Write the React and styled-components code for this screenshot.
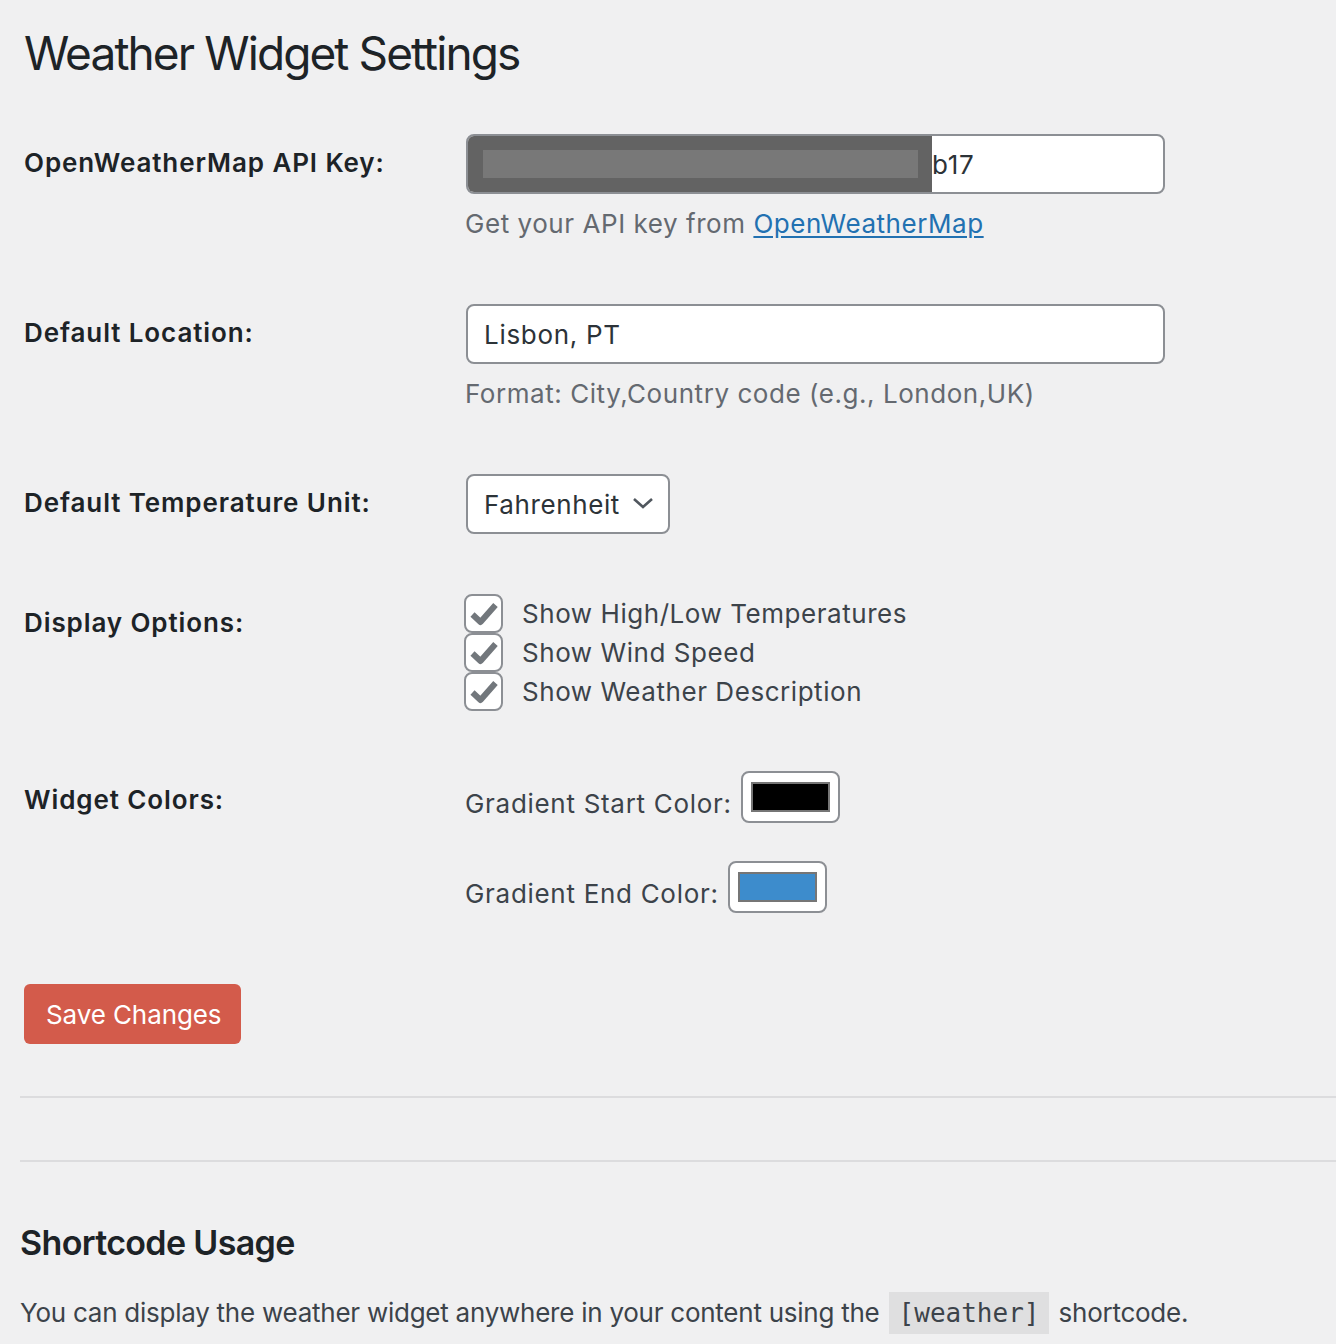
import React from "react";
import styled, { createGlobalStyle } from "styled-components";

const GlobalStyle = createGlobalStyle`
  html, body {
    margin: 0;
    padding: 0;
    background: #f0f0f1;
  }
  body {
    font-family: Inter, "Noto Sans", "Liberation Sans", sans-serif;
    font-size: 26px;
    letter-spacing: 0.55px;
    color: #3c434a;
    -webkit-font-smoothing: antialiased;
  }
  * { box-sizing: border-box; }
`;

const Wrap = styled.div`
  padding: 23px 0 40px 20px;
`;

const Settings = styled.div`
  padding-left: 4px;
`;

const Title = styled.h1`
  margin: 0 0 21px 0;
  font-size: 46px;
  line-height: 60px;
  font-weight: 400;
  letter-spacing: -1.9px;
  color: #1d2327;
`;

const FieldRow = styled.div`
  display: grid;
  grid-template-columns: 440px 1fr;
`;

const FieldLabel = styled.div`
  padding-top: 42px;
  font-size: 26px;
  line-height: 34px;
  font-weight: 600;
  letter-spacing: 0.9px;
  color: #1d2327;
`;

const FieldCell = styled.div`
  padding: 30px 0;
  display: flex;
  flex-direction: column;
  align-items: flex-start;
`;

const InputShell = styled.div`
  position: relative;
  margin-left: 2px;
`;

const TextInput = styled.input`
  display: block;
  width: 699px;
  height: 60px;
  margin: 0;
  padding: 0 16px;
  padding-left: ${(p) => (p.$indent ? `${p.$indent}px` : "16px")};
  border: 2px solid #8c8f94;
  border-radius: 8px;
  background: #fff;
  font-family: inherit;
  font-size: 26px;
  letter-spacing: 0.7px;
  color: #2c3338;
  outline: none;
`;

const Redaction = styled.div`
  position: absolute;
  left: 2px;
  top: 2px;
  bottom: 2px;
  width: 464px;
  background: #636363;
  border-radius: 6px 0 0 6px;
  padding: 14px 14px 14px 15px;
`;

const RedactionInner = styled.div`
  width: 100%;
  height: 100%;
  background: #787878;
`;

const Description = styled.p`
  margin: 10px 0 0 1px;
  font-size: 26px;
  line-height: 40px;
  color: #646970;
`;

const DocLink = styled.a`
  color: #2271b1;
  text-decoration: underline;
  text-underline-offset: 3px;
`;

const SelectShell = styled.div`
  position: relative;
  margin-left: 2px;
`;

const Select = styled.select`
  appearance: none;
  -webkit-appearance: none;
  display: block;
  height: 60px;
  width: 204px;
  margin: 0;
  padding: 0 48px 0 16px;
  border: 2px solid #8c8f94;
  border-radius: 8px;
  background: #fff;
  font-family: inherit;
  font-size: 26px;
  letter-spacing: 0.6px;
  color: #2c3338;
  outline: none;
`;

const Chevron = styled.svg`
  position: absolute;
  right: 16px;
  top: 50%;
  margin-top: -8px;
  width: 22px;
  height: 14px;
  pointer-events: none;
`;

const CheckList = styled.div`
  display: flex;
  flex-direction: column;
`;

const CheckRow = styled.label`
  display: flex;
  align-items: center;
  gap: 19px;
  height: 39px;
  font-size: 26px;
  color: #3c434a;
`;

const CheckBox = styled.span`
  width: 39px;
  height: 39px;
  border: 2px solid #8c8f94;
  border-radius: 8px;
  background: #fff;
  display: flex;
  align-items: center;
  justify-content: center;
`;

const ColorList = styled.div`
  display: flex;
  flex-direction: column;
  gap: 38px;
`;

const ColorRow = styled.div`
  display: flex;
  align-items: center;
  gap: 9px;
`;

const ColorLabel = styled.span`
  padding-top: 14px;
  padding-left: 1px;
  font-size: 26px;
  line-height: 34px;
  letter-spacing: 0.7px;
  color: #3c434a;
`;

const ColorWell = styled.span`
  width: 99px;
  height: 52px;
  border: 2px solid #8c8f94;
  border-radius: 8px;
  background: #fff;
  padding: 9px 8px;
  display: flex;
`;

const Swatch = styled.span`
  flex: 1;
  border: 2px solid #767676;
  background: ${(p) => p.$color};
`;

const SubmitBar = styled.div`
  padding-left: 4px;
  margin-top: 41px;
`;

const SaveButton = styled.button`
  height: 60px;
  padding: 0 20px 0 22px;
  border: none;
  border-radius: 6px;
  background: #d35b4b;
  color: #fff;
  font-family: inherit;
  font-size: 26px;
  letter-spacing: -0.1px;
  cursor: pointer;
`;

const Divider = styled.hr`
  margin: ${(p) => p.$top}px 0 0 0;
  border: none;
  border-top: 2px solid #dcdcde;
  height: 0;
`;

const SectionTitle = styled.h2`
  margin: 59px 0 0 0;
  font-size: 34px;
  line-height: 44px;
  font-weight: 600;
  letter-spacing: -0.65px;
  color: #1d2327;
`;

const Paragraph = styled.p`
  margin: 26px 0 0 0;
  font-size: 26px;
  line-height: 44px;
  letter-spacing: -0.25px;
  color: #3c434a;
`;

const Code = styled.code`
  font-family: "DejaVu Sans Mono", "Liberation Mono", monospace;
  font-size: 26px;
  letter-spacing: 0;
  padding: 6px 10px;
  margin: 0 2px;
  background: rgba(0, 0, 0, 0.07);
  color: #3c434a;
`;

function Check() {
  return (
    <CheckBox>
      <svg width="30" height="26" viewBox="0 0 30 26">
        <path d="M3.5 13.5 L11.5 21 L26.5 4" fill="none" stroke="#72777c" strokeWidth="6" strokeLinejoin="round" />
      </svg>
    </CheckBox>
  );
}

export default function App() {
  return (
    <>
      <GlobalStyle />
      <Wrap>
        <Settings>
          <Title>Weather Widget Settings</Title>

          <FieldRow>
            <FieldLabel>OpenWeatherMap API Key:</FieldLabel>
            <FieldCell>
              <InputShell>
                <TextInput type="text" readOnly value="b17" $indent={464} />
                <Redaction>
                  <RedactionInner />
                </Redaction>
              </InputShell>
              <Description>
                Get your API key from <DocLink href="#">OpenWeatherMap</DocLink>
              </Description>
            </FieldCell>
          </FieldRow>

          <FieldRow>
            <FieldLabel>Default Location:</FieldLabel>
            <FieldCell>
              <InputShell>
                <TextInput type="text" readOnly value="Lisbon, PT" />
              </InputShell>
              <Description>Format: City,Country code (e.g., London,UK)</Description>
            </FieldCell>
          </FieldRow>

          <FieldRow>
            <FieldLabel>Default Temperature Unit:</FieldLabel>
            <FieldCell>
              <SelectShell>
                <Select defaultValue="fahrenheit">
                  <option value="celsius">Celsius</option>
                  <option value="fahrenheit">Fahrenheit</option>
                </Select>
                <Chevron viewBox="0 0 22 14">
                  <path d="M2 3 L11 11 L20 3" fill="none" stroke="#50575e" strokeWidth="2.6" />
                </Chevron>
              </SelectShell>
            </FieldCell>
          </FieldRow>

          <FieldRow>
            <FieldLabel>Display Options:</FieldLabel>
            <FieldCell>
              <CheckList>
                <CheckRow><Check />Show High/Low Temperatures</CheckRow>
                <CheckRow><Check />Show Wind Speed</CheckRow>
                <CheckRow><Check />Show Weather Description</CheckRow>
              </CheckList>
            </FieldCell>
          </FieldRow>

          <FieldRow>
            <FieldLabel>Widget Colors:</FieldLabel>
            <FieldCell>
              <ColorList>
                <ColorRow>
                  <ColorLabel>Gradient Start Color:</ColorLabel>
                  <ColorWell><Swatch $color="#000000" /></ColorWell>
                </ColorRow>
                <ColorRow>
                  <ColorLabel>Gradient End Color:</ColorLabel>
                  <ColorWell><Swatch $color="#3d8ccc" /></ColorWell>
                </ColorRow>
              </ColorList>
            </FieldCell>
          </FieldRow>
        </Settings>

        <SubmitBar>
          <SaveButton type="button">Save Changes</SaveButton>
        </SubmitBar>

        <Divider $top={52} />
        <Divider $top={62} />

        <SectionTitle>Shortcode Usage</SectionTitle>
        <Paragraph>
          You can display the weather widget anywhere in your content using the <Code>[weather]</Code> shortcode.
        </Paragraph>
      </Wrap>
    </>
  );
}
